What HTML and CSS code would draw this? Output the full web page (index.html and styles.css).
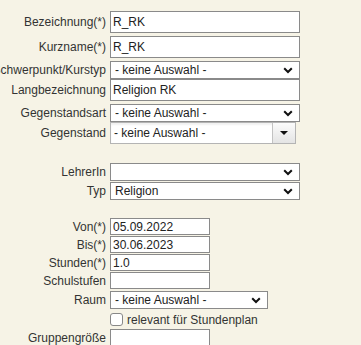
FILE: index.html
```html
<!DOCTYPE html>
<html lang="de">
<head>
    <meta charset="UTF-8">
    <meta name="viewport" content="width=device-width, initial-scale=1.0">
    <title>Gruppe bearbeiten</title>
    <link rel="stylesheet" href="styles.css">
</head>
<body>
    <form class="edit-form">
        <div class="row">
            <label class="lbl">Bezeichnung(*)</label>
            <input class="txt" type="text" value="R_RK">
        </div>
        <div class="row gap3">
            <label class="lbl">Kurzname(*)</label>
            <input class="txt" type="text" value="R_RK">
        </div>
        <div class="row gap3">
            <label class="lbl">Schwerpunkt/Kurstyp</label>
            <select class="sel"><option>- keine Auswahl -</option></select>
        </div>
        <div class="row">
            <label class="lbl">Langbezeichnung</label>
            <input class="txt" type="text" value="Religion RK">
        </div>
        <div class="row gap3">
            <label class="lbl">Gegenstandsart</label>
            <select class="sel"><option>- keine Auswahl -</option></select>
        </div>
        <div class="row">
            <label class="lbl">Gegenstand</label>
            <div class="combo">
                <input class="combo-text" type="text" value="- keine Auswahl -">
                <span class="combo-btn"><span class="tri"></span></span>
            </div>
        </div>

        <div class="row gap-section">
            <label class="lbl">LehrerIn</label>
            <select class="sel"><option></option></select>
        </div>
        <div class="row gap1">
            <label class="lbl">Typ</label>
            <select class="sel"><option>Religion</option></select>
        </div>

        <div class="row gap-section2">
            <label class="lbl">Von(*)</label>
            <input class="txt small" type="text" value="05.09.2022">
        </div>
        <div class="row gap1">
            <label class="lbl">Bis(*)</label>
            <input class="txt small" type="text" value="30.06.2023">
        </div>
        <div class="row gap1">
            <label class="lbl">Stunden(*)</label>
            <input class="txt small" type="text" value="1.0">
        </div>
        <div class="row gap1">
            <label class="lbl">Schulstufen</label>
            <input class="txt small" type="text" value="">
        </div>
        <div class="row gap2">
            <label class="lbl">Raum</label>
            <select class="sel narrow"><option>- keine Auswahl -</option></select>
        </div>
        <div class="row gap3">
            <span class="lbl"></span>
            <label class="check"><input type="checkbox"> relevant für Stundenplan</label>
        </div>
        <div class="row gap2">
            <label class="lbl">Gruppengröße</label>
            <input class="txt small" type="text" value="">
        </div>
    </form>
</body>
</html>
```

FILE: styles.css
```css
body {
    margin: 0;
    background-color: #f6f3e6;
    font-family: "Liberation Sans", Arial, sans-serif;
    font-size: 12px;
    color: #333;
    overflow: hidden;
}
.edit-form {
    padding-top: 11px;
}
.row {
    display: flex;
    align-items: center;
}
.gap1 { margin-top: 1px; }
.gap2 { margin-top: 2px; }
.gap3 { margin-top: 3px; }
.gap-section { margin-top: 19px; }
.gap-section2 { margin-top: 18px; }
.lbl {
    flex: 0 0 106px;
    width: 106px;
    margin-right: 4px;
    display: flex;
    justify-content: flex-end;
    white-space: nowrap;
}
.txt {
    box-sizing: border-box;
    width: 190px;
    height: 22px;
    margin: 0;
    padding: 0 2px;
    border: 1px solid #8a8a8a;
    border-radius: 0;
    background: #fff;
    font: inherit;
    color: #222;
    outline: none;
}
.txt.small {
    width: 100px;
    height: 17px;
}
.sel {
    appearance: none;
    -webkit-appearance: none;
    box-sizing: border-box;
    width: 190px;
    height: 18px;
    margin: 0;
    padding: 0 0 0 4px;
    border: 1px solid #8a8a8a;
    border-radius: 0;
    background: #fff url("data:image/svg+xml,%3Csvg xmlns='http://www.w3.org/2000/svg' width='10' height='7'%3E%3Cpath d='M1.2 1.2 L5 5 L8.8 1.2' fill='none' stroke='%23111' stroke-width='2'/%3E%3C/svg%3E") no-repeat right 6px center;
    font: inherit;
    color: #222;
}
.sel.narrow {
    width: 158px;
}
.combo {
    box-sizing: border-box;
    display: flex;
    width: 186px;
    height: 22px;
    border: 1px solid #b4b4b4;
    background: #fff;
    box-shadow: inset 0 2px 2px rgba(0, 0, 0, 0.06);
}
.combo-text {
    flex: 1;
    min-width: 0;
    margin: 0;
    padding: 0 3px;
    border: none;
    background: transparent;
    font: inherit;
    color: #222;
    outline: none;
}
.combo-btn {
    width: 22px;
    border-left: 1px solid #c2c2c2;
    background: linear-gradient(#fbfbfb, #e4e4e4);
    display: flex;
    align-items: center;
    justify-content: center;
}
.tri {
    width: 0;
    height: 0;
    border-left: 4px solid transparent;
    border-right: 4px solid transparent;
    border-top: 4px solid #111;
}
.check {
    display: flex;
    align-items: center;
    height: 15px;
    white-space: nowrap;
}
.check input {
    appearance: none;
    -webkit-appearance: none;
    width: 13px;
    height: 13px;
    margin: 0 4px 0 0;
    border: 1px solid #888;
    border-radius: 3px;
    background: #fff;
}
```
